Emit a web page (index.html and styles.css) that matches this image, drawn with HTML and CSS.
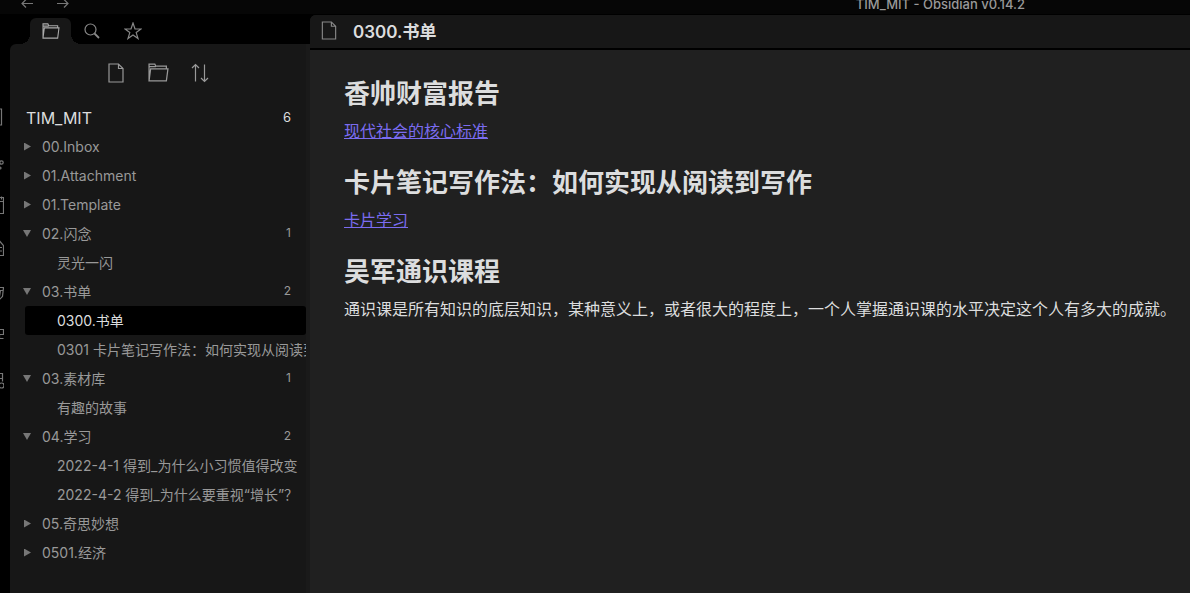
FILE: index.html
```html
<!DOCTYPE html>
<html lang="zh-CN">
<head>
    <meta charset="UTF-8">
    <meta name="viewport" content="width=device-width, initial-scale=1.0">
    <title>TIM_MIT - Obsidian v0.14.2</title>
    <link rel="stylesheet" href="styles.css">
</head>
<body>

    <!-- shared icons -->
    <svg class="sprite" aria-hidden="true">
        <symbol id="icon-folder" viewBox="0 0 20 18">
            <path d="M1 17V1h5.500l1 2h10V5.500M1 3.500h6.500M1 17L2.500 5.500H19L17.500 17z"/>
        </symbol>
        <symbol id="icon-file" viewBox="0 0 16 20">
            <path d="M1 1h9.500L15 5.500V19H1zM10.500 1v4.500H15"/>
        </symbol>
    </svg>

    <header class="titlebar">
        <nav class="history">
            <button aria-label="Back"><svg width="13" height="9" viewBox="0 0 13 9"><path d="M5 .5l-4 4 4 4M1 4.500h11"/></svg></button>
            <button aria-label="Forward"><svg width="13" height="9" viewBox="0 0 13 9"><path d="M8 .5l4 4-4 4M12 4.500H1"/></svg></button>
        </nav>
        <span class="window-title">TIM_MIT - Obsidian v0.14.2</span>
    </header>

    <div class="workspace">
        <aside class="ribbon">
            <button aria-label="Quick switcher"><svg viewBox="0 0 20 20"><path d="M2 2h15.500v16H2z"/></svg></button>
            <button aria-label="Graph view"><svg viewBox="0 0 20 20"><path d="M3 6l11 5M3 12l11 5"/><circle cx="17.500" cy="11.500" r="1.700"/><circle cx="16" cy="17" r="1"/></svg></button>
            <button aria-label="Daily note"><svg viewBox="0 0 20 20"><path d="M2 2.500h17.500v16H2zM2 6.500h17.500M17.500 1.500v3"/></svg></button>
            <button aria-label="Templates"><svg viewBox="0 0 20 20"><path d="M2 16.500V5.500h12l2-3 3.500 4v10zM16 8.500h2M16 12h2"/></svg></button>
            <button aria-label="Command palette"><svg viewBox="0 0 20 20"><path d="M2 4.500h17.500l-1 9-3 3M2 7.500h17M16.500 7.500l-1 6"/></svg></button>
            <button aria-label="Workspaces"><svg viewBox="0 0 20 20"><path d="M8 2.500h11.500v5h-4v3.500M8 11.500h11.500"/></svg></button>
            <button aria-label="Publish"><svg viewBox="0 0 20 20"><path d="M2 2.500h16.500v8M2 7.500h16.500"/><circle cx="17.500" cy="14.500" r="2.500"/></svg></button>
        </aside>

        <section class="sidebar">
            <div class="tabs">
                <button class="tab active" aria-label="File explorer"><svg width="18" height="16"><use href="#icon-folder"/></svg></button>
                <button class="tab" aria-label="Search"><svg width="16" height="16" viewBox="0 0 16 16"><circle cx="6.500" cy="6.500" r="5.500"/><path d="M10.500 10.500l4.500 4.500" stroke-width="1.800"/></svg></button>
                <button class="tab" aria-label="Starred"><svg width="18" height="18" viewBox="0 0 18 18"><path d="M9 1l2 6h6l-4.800 3.600L14 16.500l-5-3.500-5 3.500 1.800-5.900L1 7h6z"/></svg></button>
            </div>

            <div class="explorer">
                <div class="actions">
                    <button aria-label="New note"><svg width="16" height="20"><use href="#icon-file"/></svg></button>
                    <button aria-label="New folder"><svg width="21" height="19"><use href="#icon-folder"/></svg></button>
                    <button aria-label="Change sort order"><svg width="20" height="20" viewBox="0 0 20 20"><path d="M5.500 18.500v-17M2 5l3.500-3.500L9 5M14.500 1.500v17M11 15l3.500 3.500L18 15"/></svg></button>
                </div>

                <div class="row root">TIM_MIT<span class="count">6</span></div>
                <ul class="tree">
                    <li><button class="row folder">00.Inbox</button></li>
                    <li><button class="row folder">01.Attachment</button></li>
                    <li><button class="row folder">01.Template</button></li>
                    <li>
                        <button class="row folder open">02.闪念<span class="count">1</span></button>
                        <ul>
                            <li><a class="row file" href="#">灵光一闪</a></li>
                        </ul>
                    </li>
                    <li>
                        <button class="row folder open">03.书单<span class="count">2</span></button>
                        <ul>
                            <li><a class="row file active" href="#">0300.书单</a></li>
                            <li><a class="row file" href="#">0301 卡片笔记写作法：如何实现从阅读到写作</a></li>
                        </ul>
                    </li>
                    <li>
                        <button class="row folder open">03.素材库<span class="count">1</span></button>
                        <ul>
                            <li><a class="row file" href="#">有趣的故事</a></li>
                        </ul>
                    </li>
                    <li>
                        <button class="row folder open">04.学习<span class="count">2</span></button>
                        <ul>
                            <li><a class="row file" href="#">2022-4-1 得到_为什么小习惯值得改变</a></li>
                            <li><a class="row file" href="#">2022-4-2 得到_为什么要重视“增长”？</a></li>
                        </ul>
                    </li>
                    <li><button class="row folder">05.奇思妙想</button></li>
                    <li><button class="row folder">0501.经济</button></li>
                </ul>
            </div>
        </section>

        <main class="pane">
            <div class="pane-header">
                <svg width="16" height="19"><use href="#icon-file"/></svg>
                <span>0300.书单</span>
            </div>
            <article class="note">
                <h2>香帅财富报告</h2>
                <p><a href="#">现代社会的核心标准</a></p>
                <h2>卡片笔记写作法：如何实现从阅读到写作</h2>
                <p><a href="#">卡片学习</a></p>
                <h2>吴军通识课程</h2>
                <p>通识课是所有知识的底层知识，某种意义上，或者很大的程度上，一个人掌握通识课的水平决定这个人有多大的成就。</p>
            </article>
        </main>
    </div>

</body>
</html>
```
FILE: styles.css
```css
* {
    box-sizing: border-box;
}

body {
    margin: 0;
    height: 100vh;
    display: flex;
    flex-direction: column;
    overflow: hidden;
    background-color: #000;
    color: #dcddde;
    font-family: Inter, "Noto Sans CJK SC", sans-serif;
    font-size: 16px;
}

button {
    padding: 0;
    border: none;
    background: none;
    color: inherit;
    font: inherit;
    cursor: pointer;
}

svg {
    display: block;
    flex: none;
    fill: none;
    stroke: currentColor;
    stroke-width: 1.2;
}

ul {
    list-style: none;
    margin: 0;
    padding: 0;
}

.sprite {
    display: none;
}

/* Title bar */
.titlebar {
    display: flex;
    justify-content: space-between;
    align-items: flex-end;
    height: 14px;
    padding: 0 165px 2px 21px;
    background-color: #060606;
    color: #999;
}

.history {
    display: flex;
    gap: 22px;
    padding-bottom: 4px;
    color: #777;
}

.window-title {
    font-size: 13px;
    font-weight: 500;
    line-height: 16px;
}

.workspace {
    flex: 1;
    display: flex;
    min-height: 0;
}

/* Ribbon */
.ribbon {
    width: 10px;
    padding: 93px 6px 0 0;
    display: flex;
    flex-direction: column;
    align-items: flex-end;
    gap: 24px;
    overflow: hidden;
    color: #777;
}

.ribbon svg {
    width: 20px;
    height: 20px;
}

/* Sidebar */
.sidebar {
    width: 300px;
    flex: none;
    display: flex;
    flex-direction: column;
}

.tabs {
    display: flex;
    height: 30px;
    padding: 4px 20px 0;
}

.tab {
    position: relative;
    width: 41px;
    display: flex;
    justify-content: center;
    align-items: center;
    color: #888;
}

.tab.active {
    background-color: #171717;
    border-radius: 6px 6px 0 0;
    color: #aaa;
}

.tab.active::before,
.tab.active::after {
    content: "";
    position: absolute;
    bottom: 0;
    width: 10px;
    height: 10px;
}

.tab.active::before {
    right: 100%;
    background: radial-gradient(circle at 0 0, transparent 10px, #171717 10px);
}

.tab.active::after {
    left: 100%;
    background: radial-gradient(circle at 100% 0, transparent 10px, #171717 10px);
}

.explorer {
    flex: 1;
    overflow: hidden;
    border-right: 4px solid #1a1a1a;
    border-top-left-radius: 6px;
    background-color: #171717;
}

.actions {
    display: flex;
    justify-content: center;
    align-items: center;
    height: 59px;
    padding-bottom: 2px;
    color: #999;
}

.actions button {
    width: 42px;
    display: flex;
    justify-content: center;
}

.row {
    display: flex;
    align-items: center;
    width: 100%;
    height: 29px;
    padding: 0 15px 0 32px;
    color: #999;
    font-size: 14px;
    line-height: 20px;
    text-align: left;
    text-decoration: none;
    white-space: nowrap;
}

.root {
    padding-left: 16px;
    color: #dcddde;
    font-size: 16px;
}

.count {
    margin-left: auto;
    padding-bottom: 2px;
    font-size: 12px;
}

.root .count {
    font-size: 13px;
}

.folder::before {
    content: "";
    width: 7px;
    height: 8px;
    margin: 0 11px 0 -18px;
    background-color: #777;
    clip-path: polygon(0 0, 100% 50%, 0 100%);
}

.folder.open::before {
    width: 8px;
    height: 7px;
    margin: 0 11px 0 -19px;
    clip-path: polygon(0 0, 100% 0, 50% 100%);
}

.tree ul {
    padding-left: 15px;
}

.file {
    padding: 0 0 0 32px;
    overflow: hidden;
}

.file.active {
    background-color: #000;
    border-radius: 3px;
    color: #dcddde;
}

/* Note pane */
.pane {
    flex: 1;
    min-width: 0;
    display: flex;
    flex-direction: column;
    margin-top: 1px;
    border-top-left-radius: 6px;
    overflow: hidden;
    background-color: #202020;
}

.pane-header {
    display: flex;
    align-items: center;
    gap: 16px;
    height: 35px;
    padding: 0 11px 2px;
    border-bottom: 2px solid #000;
    background-color: #171717;
    font-size: 17px;
    font-weight: 600;
}

.pane-header svg {
    color: #888;
}

.note {
    flex: 1;
    padding: 27px 10px 27px 34px;
}

.note h2 {
    margin: 0 0 8px;
    font-size: 26px;
    font-weight: 700;
    line-height: 34px;
}

.note p {
    margin: 0 0 23px;
    line-height: 24px;
}

.note a {
    color: #7b6cf0;
}
```
